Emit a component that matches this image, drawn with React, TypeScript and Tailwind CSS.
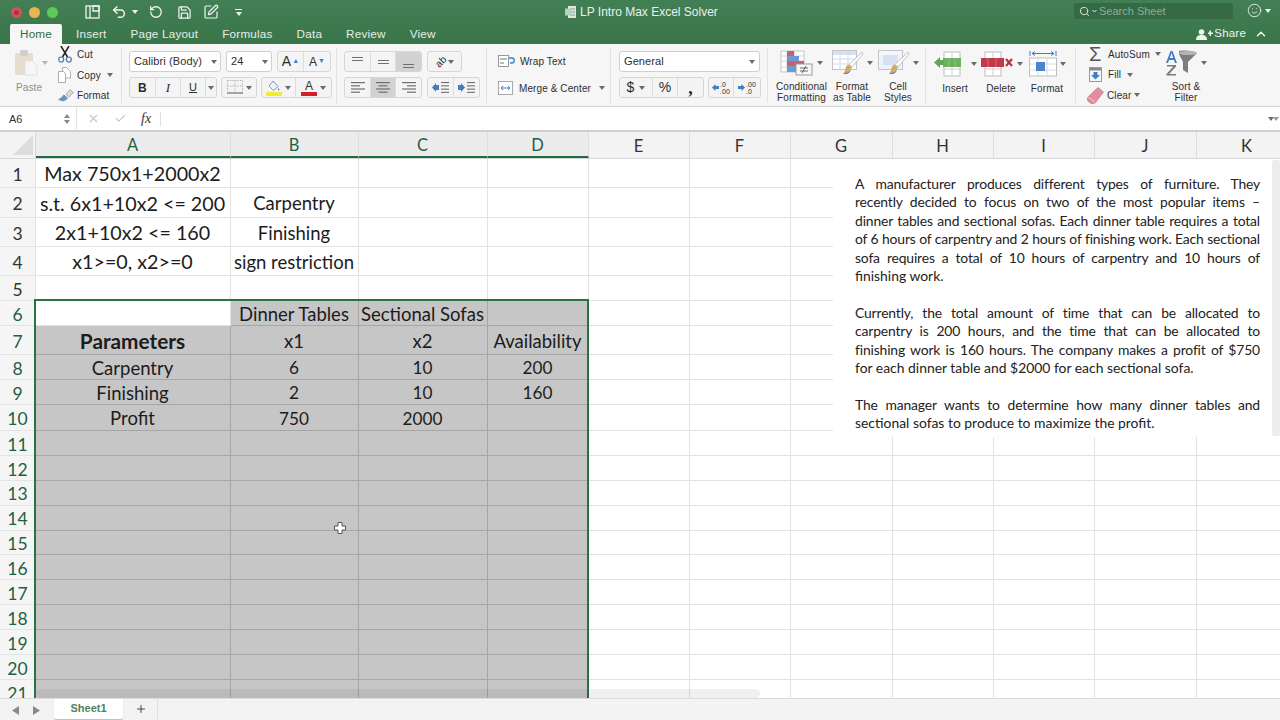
import { ChevronUp, Check, Plus, RotateCcw, Save, Search, Smile, SquarePen, Undo2, X } from "lucide-react";
import type { ReactNode } from "react";

const COLS = "grid grid-cols-[36px_195px_128px_129px_101px_101px_101px_102px_101px_101px_102px_101px]";
const HEADERS = ["A", "B", "C", "D", "E", "F", "G", "H", "I", "J", "K"];
const ROW_HEIGHTS = [29, 30, 29, 29, 25, 25, 29, 25, 25, 26, 24.9, 24.9, 24.9, 24.9, 24.9, 24.9, 24.9, 24.9, 24.9, 24.9, 24.9];

const CELLS: Record<number, string[]> = {
  0: ["Max 750x1+2000x2"],
  1: ["s.t. 6x1+10x2 <= 200", "Carpentry"],
  2: ["2x1+10x2 <= 160", "Finishing"],
  3: ["x1>=0, x2>=0", "sign restriction"],
  5: ["", "Dinner Tables", "Sectional Sofas"],
  6: ["Parameters", "x1", "x2", "Availability"],
  7: ["Carpentry", "6", "10", "200"],
  8: ["Finishing", "2", "10", "160"],
  9: ["Profit", "750", "2000"],
};

function Caret({ className = "text-[#6b6b6b]" }: { className?: string }) {
  return (
    <svg width="6" height="4" viewBox="0 0 6 4" className={`shrink-0 ${className}`}>
      <path d="M0 0h6L3 4z" fill="currentColor" />
    </svg>
  );
}

function Seg({ w, active, children }: { w: number; active?: boolean; children: ReactNode }) {
  return (
    <div
      style={{ width: w }}
      className={`flex h-full items-center justify-center border-r border-[#dcdcdc] last:border-r-0 ${active ? "bg-[#d2d2d2]" : ""}`}
    >
      {children}
    </div>
  );
}

function Group({ children }: { children: ReactNode }) {
  return <div className="flex h-[21px] overflow-hidden rounded-[3px] border border-[#d6d6d6] bg-[#f4f4f4]">{children}</div>;
}

function Lines({ kind }: { kind: "left" | "center" | "right" }) {
  const widths = [14, 9, 14, 9];
  return (
    <svg width="14" height="11" viewBox="0 0 14 11">
      {widths.map((w, i) => {
        const x = kind === "left" ? 0 : kind === "right" ? 14 - w : (14 - w) / 2;
        return <rect key={i} x={x} y={i * 3.2} width={w} height="1.2" fill="#6f6f6f" />;
      })}
    </svg>
  );
}

function Indent({ flip }: { flip?: boolean }) {
  return (
    <svg width="17" height="11" viewBox="0 0 17 11">
      <path d={flip ? "M0 3h3V1l4 4.500L3 10V8H0z" : "M7 3H4V1L0 5.500 4 10V8h3z"} fill="#3f80c4" />
      {[0, 3.3, 6.6, 9.8].map((y) => (
        <rect key={y} x="9" y={y} width="8" height="1.1" fill="#6f6f6f" />
      ))}
    </svg>
  );
}

function Clipboard() {
  return (
    <svg width="24" height="27" viewBox="0 0 24 27">
      <rect x="1" y="4" width="18" height="22" rx="1.500" fill="#e6ddcf" />
      <rect x="6" y="1" width="8" height="6" rx="1.500" fill="#cfcfcf" />
      <path d="M11 12h7l5 5v9H11z" fill="#f6f6f6" stroke="#e2e2e2" />
    </svg>
  );
}

function Scissors() {
  return (
    <svg width="14" height="17" viewBox="0 0 14 17" fill="none">
      <path d="M3 0l6.500 11M11 0L4.500 11" stroke="#222" strokeWidth="1.500" />
      <circle cx="3.200" cy="13.500" r="2.500" stroke="#3f78b8" strokeWidth="1.200" />
      <circle cx="10.800" cy="13.500" r="2.500" stroke="#3f78b8" strokeWidth="1.200" />
    </svg>
  );
}

function CopyIcon() {
  return (
    <svg width="13" height="16" viewBox="0 0 13 16" fill="#fff" stroke="#9a9a9a" strokeWidth="0.800">
      <path d="M4.500 .5h4l4 4V11h-8z" />
      <path d="M.5 4.500h5l2 2V15.500h-7z" />
    </svg>
  );
}

function Brush() {
  return (
    <svg width="16" height="14" viewBox="0 0 16 14">
      <path d="M8 5l4-4.500 3.500 3L11 8z" fill="#d8d8d8" stroke="#8a8a8a" strokeWidth="0.600" />
      <path d="M0 10c3 0 4-3 6-4.500L10 9c-2 3-6 5-10 1z" fill="#6f93bd" />
    </svg>
  );
}

function Borders() {
  return (
    <svg width="16" height="15" viewBox="0 0 16 15" fill="none">
      <path d="M.5.5h15M.5 .5v11M15.500 .5v11M8 .5v11M.5 6h15" stroke="#b9b9b9" strokeDasharray="1.500 1" />
      <path d="M0 13h16" stroke="#555" strokeWidth="1.200" />
    </svg>
  );
}

function Fill() {
  return (
    <svg width="16" height="16" viewBox="0 0 16 16">
      <path d="M7 1l5 5.500-4.500 4L3 6z" fill="#eef3fa" stroke="#5a82b0" strokeWidth="0.800" />
      <path d="M12.500 8c1 1.500 1.500 2 .5 2.500s-1.500-1-.5-2.500z" fill="#5a82b0" />
      <rect y="12" width="16" height="4" fill="#f4ea3a" />
    </svg>
  );
}

function CondIcon() {
  return (
    <svg width="34" height="26" viewBox="0 0 34 26">
      <path d="M1 1h23v21H1z" fill="#fff" stroke="#c4c4c4" />
      <path d="M7 1v21M14 1v21M1 6h23M1 11h23M1 17h23" stroke="#d6d6d6" />
      <rect x="7" y="1" width="7" height="6" fill="#c9606e" />
      <rect x="7" y="6" width="12" height="6" fill="#6e9ad3" />
      <rect x="7" y="11" width="17" height="6" fill="#c9606e" />
      <rect x="7" y="16" width="9" height="6" fill="#6e9ad3" />
      <rect x="16" y="14" width="16" height="11" fill="#f7f7f7" stroke="#9a9a9a" />
      <path d="M20 18h8M20 21h8M26 16l-4 7" stroke="#444" strokeWidth="0.800" fill="none" />
    </svg>
  );
}

function BrushTable({ light }: { light?: boolean }) {
  return (
    <svg width="32" height="26" viewBox="0 0 32 26">
      <rect x=".5" y=".5" width="24" height="19" fill={light ? "#eef2fa" : "#fff"} stroke="#c4c4c4" />
      <rect x="1" y="1" width="23" height="4" fill={light ? "#f7f7f7" : "#d7e1f2"} />
      {!light && <path d="M8 1v18M16 1v18M1 9h23M1 14h23" stroke="#cfd9ec" />}
      {light && <rect x="5" y="5" width="15" height="10" fill="#d7e1f5" />}
      <path d="M29 3c1.500-1 2.500 0 1.500 1.500L20 17l-3-2.500z" fill="#fff" stroke="#a8a8a8" strokeWidth="0.700" />
      <path d="M16.500 14.500L20 17.500c-1.500 3-4 5-9 6 2-2 2.500-3.500 2.500-5.500 .5-2 1.500-3 3-3.500z" fill="#d7a85e" />
      <path d="M11 23.500c3-.5 6-1.500 8-3.500-1 3-4 5-8 3.500z" fill="#3d78c2" />
    </svg>
  );
}

function InsertIcon() {
  return (
    <svg width="34" height="26" viewBox="0 0 34 26">
      <rect x="10" y="1" width="16" height="24" fill="#fff" stroke="#bdbdbd" />
      <path d="M18 1v24M10 18h16" stroke="#d0d0d0" />
      <rect x="9" y="7" width="18" height="9" fill="#6faf62" />
      <path d="M15 7v9M21 7v9" stroke="#8cc480" />
      <path d="M0 11.500L6 6v3h4v5H6v3z" fill="#62a657" />
    </svg>
  );
}

function DeleteIcon() {
  return (
    <svg width="34" height="26" viewBox="0 0 34 26">
      <rect x="5" y="1" width="16" height="24" fill="#fff" stroke="#bdbdbd" />
      <path d="M13 1v24M5 18h16" stroke="#d0d0d0" />
      <rect x="1" y="7" width="23" height="9" fill="#bf3b4b" />
      <path d="M8 7v9M16 7v9" stroke="#d66a76" />
      <path d="M26 8l6 7M32 8l-6 7" stroke="#b43240" strokeWidth="2.200" />
    </svg>
  );
}

function FormatIcon() {
  return (
    <svg width="28" height="26" viewBox="0 0 28 26">
      <path d="M1 0v5M27 0v5M3 2.500h22M3 2.500l3-2M3 2.500l3 2M25 2.500l-3-2M25 2.500l-3 2" stroke="#3f80c4" fill="none" />
      <rect x=".5" y="7" width="27" height="18" fill="#fff" stroke="#bdbdbd" />
      <path d="M9 7v18M18 7v18M1 13h26M1 19h26" stroke="#dadada" />
      <rect x="7" y="11" width="9" height="9" fill="#4a86c8" />
    </svg>
  );
}

function FillDown() {
  return (
    <svg width="13" height="15" viewBox="0 0 13 15">
      <rect x=".5" y=".5" width="12" height="14" fill="#f4f8fd" stroke="#9a9a9a" />
      <rect x="1" y="1" width="11" height="2.500" fill="#8a8a8a" />
      <path d="M4.500 5h4v3H11l-4.500 4.500L2 8h2.500z" fill="#3f80c4" />
    </svg>
  );
}

function Eraser() {
  return (
    <svg width="17" height="17" viewBox="0 0 17 17">
      <path d="M11 .5l5.500 4.500-8 10.500c-2 1.500-4 1.500-6 0S-.500 12 1 10z" fill="#e58c9d" stroke="#b76475" strokeWidth="0.600" />
      <path d="M1 10l7 5" stroke="#f6c9d2" />
    </svg>
  );
}

function SortFilter() {
  return (
    <svg width="32" height="26" viewBox="0 0 32 26">
      <path d="M13 1c8-1 15 0 18 2l-9 9v11l-5-3v-8L13 4z" fill="#7d7d7d" />
      <ellipse cx="22" cy="3" rx="9" ry="2" fill="#b5b5b5" />
      <path d="M4.500 1h2L11 13H9l-1-3H3l-1 3H0zM3.800 8h3.400L5.500 3z" fill="#3f80c4" />
      <path d="M1 15h9v1.500L3.200 24H10v1.500H.5V24L7.300 16.500H1z" fill="#7a7a7a" />
    </svg>
  );
}

function LargeButton({ icon, label, w, caret = true }: { icon: ReactNode; label: ReactNode; w: number; caret?: boolean }) {
  return (
    <div style={{ width: w }} className="flex shrink-0 flex-col items-center pt-[3px]">
      <div className="flex h-[28px] items-center gap-[3px]">
        {icon}
        {caret && <Caret />}
      </div>
      <div className="mt-[5px] text-center leading-[11px]">{label}</div>
    </div>
  );
}

function Ribbon() {
  return (
    <div className="flex h-[63px] shrink-0 border-b border-[#d4d4d4] bg-[#f6f6f6] text-[10px] tracking-[0.1px] text-[#2e2e2e]">
      <div className="my-[3px] flex w-[122px] border-r border-[#e2e2e2]">
        <div className="ml-[14px] flex w-[35px] flex-col items-start pt-[2px]">
          <div className="flex items-center gap-[4px]">
            <Clipboard />
            <Caret className="text-[#b5b5b5]" />
          </div>
          <div className="mt-[4px] ml-[2px] text-[#8e8e8e]">Paste</div>
        </div>
        <div className="ml-[9px] -mt-[1px] flex flex-col gap-[5px]">
          <div className="flex h-[16px] items-center gap-[5px]"><Scissors />Cut</div>
          <div className="flex h-[16px] items-center gap-[6px]"><CopyIcon />Copy<Caret /></div>
          <div className="flex h-[16px] items-center gap-[3px]"><Brush />Format</div>
        </div>
      </div>

      <div className="my-[3px] flex w-[215px] flex-col gap-[5px] border-r border-[#e2e2e2] pt-[4px] pl-[7px]">
        <div className="flex gap-[5px]">
          <div className="flex h-[21px] w-[92px] items-center justify-between rounded-[3px] border border-[#cfcfcf] bg-white pr-[3px] pl-[4px] text-[11px]">
            Calibri (Body)<Caret />
          </div>
          <div className="flex h-[21px] w-[46px] items-center justify-between rounded-[3px] border border-[#cfcfcf] bg-white pr-[3px] pl-[4px] text-[11px]">
            24<Caret />
          </div>
          <Group>
            <Seg w={26}><span className="flex items-center gap-[1px] text-[14px]">A<span className="text-[7px] text-[#3f80c4]">▲</span></span></Seg>
            <Seg w={26}><span className="flex items-center gap-[1px] text-[12px]">A<span className="text-[7px] text-[#3f80c4]">▼</span></span></Seg>
          </Group>
        </div>
        <div className="flex gap-[4px]">
          <Group>
            <Seg w={26}><span className="text-[12px] font-bold">B</span></Seg>
            <Seg w={25}><span className="font-['Liberation_Serif',serif] text-[13px] italic">I</span></Seg>
            <Seg w={25}><span className="text-[11px] underline">U</span></Seg>
            <Seg w={10}><Caret /></Seg>
          </Group>
          <Group>
            <Seg w={34}><div className="flex items-center gap-[3px]"><Borders /><Caret /></div></Seg>
          </Group>
          <Group>
            <Seg w={34}><div className="flex items-center gap-[3px]"><Fill /><Caret /></div></Seg>
            <Seg w={35}>
              <div className="flex items-center gap-[3px]">
                <div className="flex w-[16px] flex-col items-center leading-none">
                  <span className="text-[12px] font-medium">A</span>
                  <span className="h-[4px] w-[16px] bg-[#d51f26]" />
                </div>
                <Caret />
              </div>
            </Seg>
          </Group>
        </div>
      </div>

      <div className="my-[3px] flex w-[150px] flex-col gap-[5px] border-r border-[#e2e2e2] pt-[4px] pl-[7px]">
        <div className="flex gap-[5px]">
          <Group>
            <Seg w={26}><div className="mb-[5px] h-[4px] w-[11px] border-y border-[#6f6f6f]" /></Seg>
            <Seg w={25}><div className="h-[4px] w-[11px] border-y border-[#6f6f6f]" /></Seg>
            <Seg w={25} active><div className="mt-[8px] h-[4px] w-[11px] border-y border-[#6f6f6f]" /></Seg>
          </Group>
          <Group>
            <Seg w={33}>
              <div className="flex items-center gap-[2px]">
                <span className="-rotate-45 text-[10px]">ab</span>
                <Caret />
              </div>
            </Seg>
          </Group>
        </div>
        <div className="flex gap-[5px]">
          <Group>
            <Seg w={26}><Lines kind="left" /></Seg>
            <Seg w={25} active><Lines kind="center" /></Seg>
            <Seg w={25}><Lines kind="right" /></Seg>
          </Group>
          <Group>
            <Seg w={26}><Indent /></Seg>
            <Seg w={25}><Indent flip /></Seg>
          </Group>
        </div>
      </div>

      <div className="my-[3px] flex w-[124px] flex-col gap-[11px] border-r border-[#e2e2e2] pt-[6px] pl-[11px]">
        <div className="flex h-[16px] items-center gap-[5px]">
          <svg width="17" height="12" viewBox="0 0 17 12" fill="none">
            <rect x=".5" y=".5" width="10" height="11" fill="#fff" stroke="#9a9a9a" />
            <path d="M2 4h7M2 8h4" stroke="#777" />
            <path d="M11 3h3c3 0 3 5 0 5h-2" stroke="#3f80c4" strokeWidth="1.300" />
          </svg>
          Wrap Text
        </div>
        <div className="flex h-[16px] items-center gap-[6px]">
          <svg width="15" height="14" viewBox="0 0 15 14" fill="none">
            <rect x=".5" y=".5" width="14" height="13" fill="#fff" stroke="#a8a8a8" />
            <path d="M3 7h9M3 7l2-2M3 7l2 2M12 7l-2-2M12 7l-2 2" stroke="#3f80c4" />
          </svg>
          Merge & Center
          <Caret className="ml-[2px] text-[#6b6b6b]" />
        </div>
      </div>

      <div className="my-[3px] flex w-[157px] flex-col gap-[5px] border-r border-[#e2e2e2] pt-[4px] pl-[8px]">
        <div className="flex h-[21px] w-[141px] items-center justify-between rounded-[3px] border border-[#cfcfcf] bg-white pr-[4px] pl-[4px] text-[11px]">
          General<Caret />
        </div>
        <div className="flex gap-[4px]">
          <Group>
            <Seg w={33}><div className="flex items-center gap-[5px] text-[14px]">$<Caret /></div></Seg>
            <Seg w={25}><span className="text-[14px]">%</span></Seg>
            <Seg w={25}><span className="font-['Liberation_Serif',serif] text-[18px] leading-[10px] font-bold">,</span></Seg>
          </Group>
          <Group>
            <Seg w={25}>
              <div className="flex items-center gap-[1px] text-[7px] leading-[7px]">
                <svg width="7" height="7" viewBox="0 0 7 7"><path d="M0 3.500L3.500 0v2H7v3H3.500v2z" fill="#3f80c4" /></svg>
                <div>.0<br />.00</div>
              </div>
            </Seg>
            <Seg w={26}>
              <div className="flex items-center gap-[1px] text-[7px] leading-[7px]">
                <svg width="7" height="7" viewBox="0 0 7 7"><path d="M7 3.500L3.500 0v2H0v3h3.500v2z" fill="#3f80c4" /></svg>
                <div>.00<br />.0</div>
              </div>
            </Seg>
          </Group>
        </div>
      </div>

      <div className="my-[3px] flex w-[158px] border-r border-[#e2e2e2] pl-[7px]">
        <LargeButton w={53} icon={<CondIcon />} label={<>Conditional<br />Formatting</>} />
        <LargeButton w={48} icon={<BrushTable />} label={<>Format<br />as Table</>} />
        <LargeButton w={44} icon={<BrushTable light />} label={<>Cell<br />Styles</>} />
      </div>

      <div className="my-[3px] flex w-[150px] border-r border-[#e2e2e2] pl-[6px]">
        <LargeButton w={46} icon={<InsertIcon />} label="Insert" />
        <LargeButton w={46} icon={<DeleteIcon />} label="Delete" />
        <LargeButton w={46} icon={<FormatIcon />} label="Format" />
      </div>

      <div className="my-[3px] flex pl-[13px]">
        <div className="-mt-[1px] flex w-[75px] flex-col gap-[5px]">
          <div className="flex h-[16px] items-center gap-[5px]">
            <span className="w-[14px] text-[20px] leading-none text-[#555]">Σ</span>AutoSum<Caret />
          </div>
          <div className="flex h-[16px] items-center gap-[6px]"><FillDown />Fill<Caret /></div>
          <div className="-ml-[2px] flex h-[16px] items-center gap-[3px]"><Eraser />Clear<Caret /></div>
        </div>
        <LargeButton w={44} icon={<SortFilter />} label={<>Sort &<br />Filter</>} />
      </div>
    </div>
  );
}

function TitleBar() {
  const tabs = ["Insert", "Page Layout", "Formulas", "Data", "Review", "View"];
  return (
    <div className="relative h-[44px] shrink-0 bg-[linear-gradient(#437f54,#3a754a)] text-white">
      <div className="flex h-[24px] items-center">
        <div className="ml-[11px] flex items-center gap-[7px]">
          <span className="h-[11px] w-[11px] rounded-full border-[3px] border-[#d64f5b] bg-[#a8323f]" />
          <span className="h-[11px] w-[11px] rounded-full bg-[#e8b54e]" />
          <span className="h-[11px] w-[11px] rounded-full bg-[#5ec95c]" />
        </div>
        <svg width="15" height="14" viewBox="0 0 15 14" fill="none" stroke="#eef4ef" strokeWidth="1.300" className="ml-[27px]">
          <rect x="1" y="1" width="13" height="12" />
          <path d="M5 1v12M8 1l6 0v5H8z" />
        </svg>
        <Undo2 size={16} strokeWidth={2.200} className="ml-[11px] text-[#eef4ef]" />
        <Caret className="ml-[5px] text-[#eef4ef]" />
        <RotateCcw size={14} strokeWidth={2.200} className="ml-[11px] text-[#eef4ef]" />
        <Save size={15} strokeWidth={2} className="ml-[14px] text-[#eef4ef]" />
        <SquarePen size={16} strokeWidth={1.800} className="ml-[11px] text-[#eef4ef]" />
        <div className="ml-[16px] flex flex-col items-center gap-[2px]">
          <span className="h-px w-[7px] bg-[#eef4ef]" />
          <Caret className="text-[#eef4ef]" />
        </div>
      </div>

      <div className="absolute top-[3px] left-[565px] flex items-center gap-[4px] text-[12px] text-[#e9f1eb]">
        <svg width="11" height="12" viewBox="0 0 11 12">
          <rect x="3" y="0" width="8" height="12" fill="#dfe9e1" />
          <path d="M5 3h5M5 6h5M5 9h5" stroke="#76a184" />
          <rect x="0" y="2.500" width="6" height="7" fill="#b7d1bf" />
        </svg>
        LP Intro Max Excel Solver
      </div>

      <div className="absolute top-[3px] left-[1074px] flex h-[16px] w-[159px] items-center rounded-[2px] bg-[#356a44] pl-[5px] text-[11px] text-[#8dae97]">
        <Search size={11} strokeWidth={2} className="text-[#e6efe8]" />
        <svg width="5" height="4" viewBox="0 0 5 4" fill="none" stroke="#e6efe8" className="mr-[2px] ml-[2px]"><path d="M.5 1l2 2 2-2" /></svg>
        Search Sheet
      </div>
      <div className="absolute top-[3px] left-[1247px] flex items-center gap-[3px]">
        <Smile size={15} strokeWidth={1.400} className="text-[#eef4ef]" />
        <Caret className="text-[#eef4ef]" />
      </div>

      <div className="flex h-[20px] items-end text-[11.700px] tracking-[0.2px] text-[#e4eee6]">
        <div className="ml-[10px] flex h-[20px] w-[52px] items-center justify-center rounded-t-[2px] bg-[#f6f6f6] text-[#2f6e45]">Home</div>
        <div className="ml-[14px] flex h-[20px] items-center gap-[24px]">
          {tabs.map((t) => <span key={t}>{t}</span>)}
        </div>
        <div className="ml-auto mr-[12px] flex h-[20px] items-center text-[11.500px] text-[#eef4ef]">
          <svg width="17" height="11" viewBox="0 0 17 11" fill="#eef4ef" className="mr-[1px]">
            <circle cx="5.500" cy="3" r="2.800" />
            <path d="M0 11c0-4 2.500-5 5.500-5s5.500 1 5.500 5z" />
            <path d="M12 3.500h1.500V1.500H15v2h2V5h-2v2h-1.500V5H12z" />
          </svg>
          Share
          <ChevronUp size={14} strokeWidth={2.500} className="ml-[8px]" />
        </div>
      </div>
    </div>
  );
}

function FormulaBar() {
  return (
    <div className="flex h-[25px] shrink-0 items-center border-b-2 border-[#cfcfcf] bg-white text-[#444]">
      <div className="flex h-full w-[77px] items-center justify-between border-r border-[#e2e2e2] pt-px pr-[6px] pl-[9px] text-[11px] text-[#333]">
        A6
        <div className="flex flex-col gap-[2px]">
          <Caret className="rotate-180 text-[#888]" />
          <Caret className="text-[#888]" />
        </div>
      </div>
      <X size={13} strokeWidth={2} className="ml-[10px] text-[#c6c6c6]" />
      <Check size={13} strokeWidth={2} className="ml-[14px] text-[#c6c6c6]" />
      <span className="ml-[14px] w-[19px] font-['Liberation_Serif',serif] text-[14px] italic text-[#333]">fx</span>
      <div className="h-[14px] w-px bg-[#dfdfdf]" />
      <div className="ml-auto mr-[1px] flex text-[#777]">
        <Caret /><Caret className="-ml-[1px] text-[#999]" />
      </div>
    </div>
  );
}

function cellSize(text: string, r: number, c: number) {
  if (r === 6 && c === 0) return "text-[20.800px] font-bold";
  if (c === 0 && r < 4) return "text-[19.700px]";
  if (/^\d+$/.test(text)) return "text-[17.200px]";
  return "";
}

function Sheet() {
  return (
    <div className="relative min-h-0 flex-1 overflow-hidden bg-white font-[Lato,sans-serif] text-[18.500px] leading-none text-[#1c1c1c]">
      <div className={`${COLS} h-[27px] border-b border-[#d8d8d8] bg-[#f3f3f3] text-[16.500px]`}>
        <div className="relative border-r border-[#d8d8d8]">
          <svg width="20" height="20" viewBox="0 0 20 20" className="absolute top-[3px] left-[13px]"><path d="M20 0v20H0z" fill="#dcdcdc" /></svg>
        </div>
        {HEADERS.map((h, i) => (
          <div
            key={h}
            className={`flex items-center justify-center border-r border-[#dedede] pt-[3px] pr-px ${i < 4 ? "border-b-2 border-b-[#1f6b41] bg-[#ececec] text-[#1f6040]" : "text-[#333]"}`}
          >
            {h}
          </div>
        ))}
      </div>

      {ROW_HEIGHTS.map((rowH, r) => (
        <div key={r} style={{ height: rowH }} className={COLS}>
          <div className={`flex items-center justify-center border-r border-b border-[#e4e4e4] bg-[#f5f5f5] pt-[3px] text-[17.500px] ${r >= 5 ? "text-[#1f6040]" : "text-[#333]"}`}>
            {r + 1}
          </div>
          {HEADERS.map((_, c) => {
            const selected = c < 4 && r >= 5;
            const active = r === 5 && c === 0;
            const text = CELLS[r]?.[c] ?? "";
            return (
              <div
                key={c}
                className={`flex items-center justify-center border-r border-b pt-[2px] pr-px whitespace-nowrap ${
                  selected && !active ? "border-[#a6a6a6] bg-[#c6c6c6]" : "border-[#e2e2e2]"
                } ${cellSize(text, r, c)}`}
              >
                {text}
              </div>
            );
          })}
        </div>
      ))}

      <div className="absolute top-[167px] left-[34px] h-[410px] w-[555px] border-2 border-[#2a7049]" />

      <div className="absolute top-[27px] left-[833px] h-[278px] w-[439px] bg-white pt-[16px] pr-[12px] pl-[22px] text-[13.900px] leading-[18.400px] text-[#222]">
        <TextLines lines={["A manufacturer produces different types of furniture. They", "recently decided to focus on two of the most popular items –", "dinner tables and sectional sofas. Each dinner table requires a total", "of 6 hours of carpentry and 2 hours of finishing work. Each sectional", "sofa requires a total of 10 hours of carpentry and 10 hours of"]} last="finishing work." />
        <TextLines lines={["Currently, the total amount of time that can be allocated to", "carpentry is 200 hours, and the time that can be allocated to", "finishing work is 160 hours. The company makes a profit of $750"]} last="for each dinner table and $2000 for each sectional sofa." />
        <TextLines lines={["The manager wants to determine how many dinner tables and"]} last="sectional sofas to produce to maximize the profit." />
      </div>
      <div className="absolute top-[28px] left-[1272px] h-[276px] w-[8px] rounded-[2px] bg-[#ededed]" />

      <div className="absolute bottom-0 left-[36px] h-[9px] w-[724px] rounded-full bg-black/6" />

      <svg width="12" height="12" viewBox="0 0 12 12" className="absolute top-[390px] left-[334px]">
        <path d="M4 .5h4v3.500h3.500v4H8v3.500H4V8H.5V4H4z" fill="#fff" stroke="#555" />
      </svg>
    </div>
  );
}

function TextLines({ lines, last }: { lines: string[]; last: string }) {
  return (
    <div className="mb-[18.400px]">
      {lines.map((l) => (
        <div key={l} className="whitespace-nowrap text-justify tracking-[-0.15px] [text-align-last:justify]">{l}</div>
      ))}
      <div>{last}</div>
    </div>
  );
}

function TabBar() {
  return (
    <div className="flex h-[22px] shrink-0 items-start border-t border-[#dcdcdc] bg-[#f3f3f3]">
      <svg width="8" height="9" viewBox="0 0 8 9" className="mt-[7px] ml-[12px]"><path d="M7 0v9L0 4.500z" fill="#8a8a8a" /></svg>
      <svg width="8" height="9" viewBox="0 0 8 9" className="mt-[7px] ml-[13px]"><path d="M0 0v9l7-4.500z" fill="#8a8a8a" /></svg>
      <div className="ml-[13px] flex h-[20px] w-[69px] items-center justify-center rounded-b-[2px] bg-white pb-[2px] text-[11px] font-bold text-[#4f8462] shadow-[0_1px_1px_#bdbdbd]">
        Sheet1
      </div>
      <Plus size={12} strokeWidth={2} className="mt-[4px] ml-[12px] text-[#444]" />
      <div className="ml-[10px] h-[20px] w-px bg-[#e0e0e0]" />
    </div>
  );
}

export default function App() {
  return (
    <div className="flex h-[720px] w-[1280px] flex-col overflow-hidden bg-white font-['Liberation_Sans',sans-serif]">
      <TitleBar />
      <Ribbon />
      <FormulaBar />
      <Sheet />
      <TabBar />
    </div>
  );
}
